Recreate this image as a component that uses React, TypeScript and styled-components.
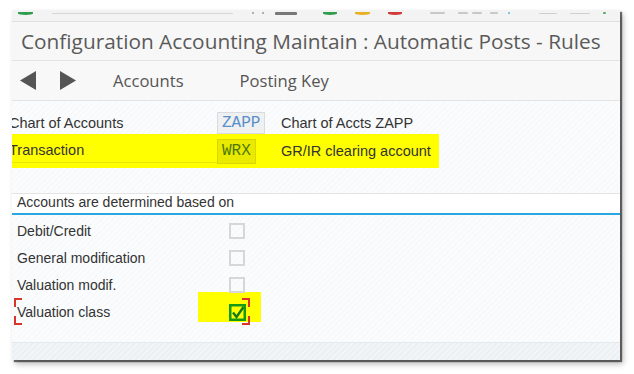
import React from "react";
import styled, { createGlobalStyle } from "styled-components";

const Global = createGlobalStyle`
  html, body { margin: 0; padding: 0; background: #ffffff; }
  body { font-family: "Liberation Sans", Arial, sans-serif; color: #333; }
`;

const Page = styled.div`
  width: 634px;
  height: 374px;
  box-sizing: border-box;
  padding: 10px 0 0 12px;
  background: #fff;
`;

const Window = styled.div`
  width: 608px;
  height: 350px;
  display: flex;
  flex-direction: column;
  overflow: hidden;
  background: #fafbfc;
  box-shadow: 2px 2px 1px rgba(0, 0, 0, 0.55), 3px 4px 6px rgba(0, 0, 0, 0.28);
`;

const TopStrip = styled.div`
  height: 11px;
  flex: none;
  display: flex;
  align-items: flex-start;
  background: #f3f3f3;
  border-bottom: 1px solid #e0e0e0;
`;

const StripMark = styled.span<{ $gap: number; $w: number; $h: number; $c: string; $round?: boolean; $top?: number }>`
  flex: none;
  margin-left: ${(p) => p.$gap}px;
  margin-top: ${(p) => p.$top ?? 2}px;
  width: ${(p) => p.$w}px;
  height: ${(p) => p.$h}px;
  background: ${(p) => p.$c};
  border-radius: ${(p) => (p.$round ? "0 0 50% 50%" : "1px")};
`;

const TitleBar = styled.div`
  height: 38px;
  flex: none;
  display: flex;
  align-items: center;
  padding-left: 9px;
  font-family: "Open Sans", "Liberation Sans", sans-serif;
  font-size: 20.8px;
  color: #5a5a5a;
  background: #f7f7f7;
  border-bottom: 1px solid #e3e3e3;
  white-space: nowrap;
`;

const Toolbar = styled.div`
  height: 39px;
  flex: none;
  display: flex;
  align-items: center;
  padding-left: 8px;
  background: #f8f8f8;
  border-bottom: 1px solid #e3e3e3;
`;

const ArrowButton = styled.span<{ $gap: number }>`
  display: flex;
  margin-left: ${(p) => p.$gap}px;
`;

const ToolText = styled.span<{ $gap: number }>`
  margin-left: ${(p) => p.$gap}px;
  font-family: "Open Sans", "Liberation Sans", sans-serif;
  font-size: 16.6px;
  color: #555;
`;

const Content = styled.div`
  flex: 1;
  display: flex;
  flex-direction: column;
  padding-top: 11px;
  background: repeating-linear-gradient(135deg, #fbfcfd 0 2px, #f7f9fa 2px 4px);
`;

const FieldRow = styled.div<{ $hl?: boolean; $h: number }>`
  display: grid;
  grid-template-columns: 205px 64px auto;
  align-items: center;
  height: ${(p) => p.$h}px;
  width: ${(p) => (p.$hl ? "427px" : "auto")};
  background: ${(p) => (p.$hl ? "#ffff00" : "transparent")};
  font-size: 14.5px;
`;

const FieldLabel = styled.span<{ $hl?: boolean }>`
  margin-left: -3px;
  color: #333;
  white-space: nowrap;
  ${(p) => (p.$hl ? "border-bottom: 1px solid rgba(120,120,0,0.18); padding: 3px 0 4px;" : "")}
`;

const FieldBox = styled.span<{ $hl?: boolean; $h: number }>`
  justify-self: start;
  display: flex;
  align-items: center;
  height: ${(p) => p.$h}px;
  padding: 0 4px;
  box-sizing: border-box;
  font-family: "Liberation Mono", "Courier New", monospace;
  font-size: 16px;
  color: ${(p) => (p.$hl ? "#4f7a00" : "#5b8fc8")};
  background: ${(p) => (p.$hl ? "#eaea00" : "#eef0f2")};
  border: 1px solid ${(p) => (p.$hl ? "#d8d800" : "#d9dcdf")};
`;

const FieldText = styled.span`
  color: #333;
  white-space: nowrap;
`;

const SectionHeader = styled.div`
  margin-top: 25px;
  display: flex;
  align-items: center;
  padding: 0 0 3px 5px;
  box-sizing: content-box;
  height: 16px;
  font-size: 14px;
  color: #333;
  background: #ffffff;
  border-top: 1px solid #e4e4e4;
  border-bottom: 2px solid #2aa7e0;
`;

const CheckList = styled.div`
  padding-top: 2px;
  display: flex;
  flex-direction: column;
`;

const CheckRow = styled.div`
  position: relative;
  display: grid;
  grid-template-columns: 212px 17px;
  align-items: center;
  height: 27px;
  padding-left: 5px;
  font-size: 14px;
`;

const CheckLabel = styled.span`
  position: relative;
  z-index: 1;
  color: #333;
  white-space: nowrap;
`;

const Box = styled.span`
  position: relative;
  z-index: 1;
  width: 16px;
  height: 16px;
  box-sizing: border-box;
  border: 2px solid #d7d7d7;
  background: transparent;
`;

const CheckedBox = styled.svg`
  position: relative;
  z-index: 1;
  margin-top: 1px;
`;

const Highlight = styled.span`
  position: absolute;
  left: 186px;
  top: -6px;
  width: 63px;
  height: 30px;
  background: #ffff00;
  z-index: 0;
`;

const Corner = styled.span<{ $v: "top" | "bottom"; $h: "left" | "right" }>`
  position: absolute;
  z-index: 2;
  width: 6px;
  height: 7px;
  ${(p) => p.$v}: 0;
  ${(p) => (p.$h === "left" ? "left: 2px;" : "left: 230px;")}
  border-${(p) => p.$v}: 2px solid #d9332b;
  border-${(p) => p.$h}: 2px solid #d9332b;
`;

const BottomStrip = styled.div`
  height: 17px;
  flex: none;
  border-top: 1px solid #e6e9ec;
  background: repeating-linear-gradient(135deg, #f1f5f8 0 2px, #ebf0f4 2px 4px);
`;

const strip = [
  { gap: 6, w: 15, h: 3, c: "#2f9e4c", round: true },
  { gap: 19, w: 181, h: 1, c: "#d6d6d6", top: 3 },
  { gap: 19, w: 2, h: 2, c: "#999" },
  { gap: 8, w: 2, h: 2, c: "#999" },
  { gap: 11, w: 22, h: 3, c: "#777" },
  { gap: 26, w: 14, h: 3, c: "#2f9e4c", round: true },
  { gap: 18, w: 15, h: 3, c: "#e8b022", round: true },
  { gap: 18, w: 14, h: 3, c: "#d23a3a", round: true },
  { gap: 28, w: 15, h: 2, c: "#c8c8c8" },
  { gap: 13, w: 10, h: 2, c: "#c8c8c8" },
  { gap: 4, w: 10, h: 2, c: "#c8c8c8" },
  { gap: 8, w: 8, h: 2, c: "#c8c8c8" },
  { gap: 10, w: 2, h: 2, c: "#5ab4e6" },
  { gap: 29, w: 18, h: 1, c: "#cfcfcf", top: 3 },
  { gap: 13, w: 20, h: 1, c: "#cfcfcf", top: 3 },
  { gap: 13, w: 3, h: 2, c: "#5aa86a" },
];

const checks = [
  { label: "Debit/Credit", on: false },
  { label: "General modification", on: false },
  { label: "Valuation modif.", on: false },
  { label: "Valuation class", on: true },
];

export default function App() {
  return (
    <Page>
      <Global />
      <Window>
        <TopStrip>
          {strip.map((s, i) => (
            <StripMark key={i} $gap={s.gap} $w={s.w} $h={s.h} $c={s.c} $round={s.round} $top={s.top} />
          ))}
        </TopStrip>
        <TitleBar>Configuration Accounting Maintain : Automatic Posts - Rules</TitleBar>
        <Toolbar>
          <ArrowButton $gap={0}>
            <svg width="17" height="19" viewBox="0 0 17 19">
              <polygon points="16,0 16,19 0,9.5" fill="#555" />
            </svg>
          </ArrowButton>
          <ArrowButton $gap={22}>
            <svg width="17" height="19" viewBox="0 0 17 19">
              <polygon points="1,0 1,19 17,9.5" fill="#555" />
            </svg>
          </ArrowButton>
          <ToolText $gap={37}>Accounts</ToolText>
          <ToolText $gap={56}>Posting Key</ToolText>
        </Toolbar>
        <Content>
          <FieldRow $h={22}>
            <FieldLabel>Chart of Accounts</FieldLabel>
            <FieldBox $h={22}>ZAPP</FieldBox>
            <FieldText>Chart of Accts ZAPP</FieldText>
          </FieldRow>
          <FieldRow $hl $h={34}>
            <FieldLabel $hl>Transaction</FieldLabel>
            <FieldBox $hl $h={25}>WRX</FieldBox>
            <FieldText>GR/IR clearing account</FieldText>
          </FieldRow>
          <SectionHeader>Accounts are determined based on</SectionHeader>
          <CheckList>
            {checks.map((c) => (
              <CheckRow key={c.label}>
                {c.on && <Highlight />}
                <CheckLabel>{c.label}</CheckLabel>
                {c.on ? (
                  <CheckedBox width="17" height="17" viewBox="0 0 17 17">
                    <rect x="1.25" y="1.25" width="14.5" height="14.5" fill="none" stroke="#149a14" strokeWidth="2.5" />
                    <path d="M4 8.5 L7.5 13 L14.5 3" fill="none" stroke="#137a13" strokeWidth="2.4" />
                  </CheckedBox>
                ) : (
                  <Box />
                )}
                {c.on && (
                  <>
                    <Corner $v="top" $h="left" />
                    <Corner $v="bottom" $h="left" />
                    <Corner $v="top" $h="right" />
                    <Corner $v="bottom" $h="right" />
                  </>
                )}
              </CheckRow>
            ))}
          </CheckList>
        </Content>
        <BottomStrip />
      </Window>
    </Page>
  );
}
